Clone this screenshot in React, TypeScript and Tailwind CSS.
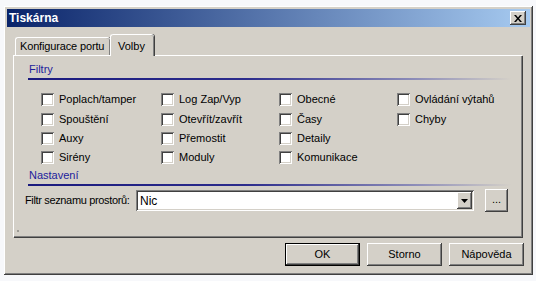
const RAISED =
  'shadow-[inset_-1px_-1px_#404040,inset_1px_1px_#ffffff,inset_-2px_-2px_#808080,inset_2px_2px_#d4d0c8]';
const SUNKEN =
  'shadow-[inset_1px_1px_#808080,inset_-1px_-1px_#ffffff,inset_2px_2px_#404040,inset_-2px_-2px_#d4d0c8]';

const FILTERS = [
  ['Poplach/tamper', 'Log Zap/Vyp', 'Obecné', 'Ovládání výtahů'],
  ['Spouštění', 'Otevřít/zavřít', 'Časy', 'Chyby'],
  ['Auxy', 'Přemostit', 'Detaily', null],
  ['Sirény', 'Moduly', 'Komunikace', null],
];

function CheckBox({ label }: { label: string }) {
  return (
    <div className="flex items-center gap-[5px] h-[13px] mt-[3px]">
      <span className={`w-[13px] h-[13px] bg-white shrink-0 ${SUNKEN}`} />
      <span className="leading-[13px] whitespace-nowrap">{label}</span>
    </div>
  );
}

function Section({ title }: { title: string }) {
  return (
    <div className="flex flex-col">
      <div className="pl-[15px] h-[14px] leading-[14px] text-[#1c1c9c]">{title}</div>
      <div className="ml-[14px] mt-[2px] w-[483px] h-[2px] bg-[linear-gradient(to_right,#1a1a7e_0%,#2c2c8c_45%,#8c8cb8_80%,#d4d0c8_100%)]" />
    </div>
  );
}

function Button({ children, primary }: { children: React.ReactNode; primary?: boolean }) {
  return (
    <div
      className={`w-[75px] h-[23px] flex items-center justify-center ${
        primary ? 'border border-black' : ''
      }`}
    >
      <div className={`w-full h-full flex items-center justify-center ${RAISED}`}>{children}</div>
    </div>
  );
}

export default function App() {
  return (
    <div
      className="w-[536px] h-[281px] bg-[#f7f8fb] overflow-hidden pt-[6px] pl-[4px] text-[11px] text-black"
      style={{ fontFamily: '"Liberation Sans", Arial, sans-serif' }}
    >
      <div className={`w-[529px] h-[269px] bg-[#d4d0c8] p-[3px] flex flex-col ${RAISED}`}>
        {/* title bar */}
        <div className="h-[18px] flex items-center pl-[2px] pr-[4px] bg-[linear-gradient(to_right,#0a246a,#a6caf0)]">
          <span className="text-white font-bold text-[12px] leading-[18px]">Tiskárna</span>
          <div className={`ml-auto w-[16px] h-[14px] bg-[#d4d0c8] flex items-center justify-center ${RAISED}`}>
            <svg width="8" height="7" viewBox="0 0 8 7">
              <path d="M0 0h2l2 2.5L6 0h2L5 3.5 8 7H6L4 4.5 2 7H0l3-3.5z" fill="#000" />
            </svg>
          </div>
        </div>

        <div className="flex flex-col px-[6px]">
          {/* tabs */}
          <div className="mt-[7px] h-[21px] flex items-end pl-[2px] relative z-10">
            <div className="w-[95px] h-[18px] rounded-t-[3px] border-t border-l border-white shadow-[inset_-1px_0_#808080,1px_0_#404040] flex items-center pl-[4px] tracking-[-0.15px] whitespace-nowrap">
              Konfigurace portu
            </div>
            <div className="w-[44px] h-[22px] -mb-[1px] bg-[#d4d0c8] rounded-t-[3px] border-t border-l border-white shadow-[inset_-1px_0_#808080,1px_0_#404040] flex items-start pt-[3px] pl-[7px]">
              Volby
            </div>
          </div>

          {/* panel */}
          <div className="relative w-[509px] h-[182px] border-t border-l border-white shadow-[inset_-1px_-1px_#808080,1px_1px_#404040] flex flex-col pt-[6px]">
            <Section title="Filtry" />
            <div className="mt-[10px] ml-[27px] grid grid-cols-[120px_118px_118px_118px] grid-rows-[20px_19px_19px_19px]">
              {FILTERS.flatMap((row, r) =>
                row.map((label, c) =>
                  label ? <CheckBox key={`${r}-${c}`} label={label} /> : <div key={`${r}-${c}`} />
                )
              )}
            </div>
            <div className="mt-[1px]">
              <Section title="Nastavení" />
            </div>
            <div className="mt-[3px] h-[23px] flex items-center pl-[11px]">
              <span className="w-[111px] whitespace-nowrap tracking-[-0.35px]">Filtr seznamu prostorů:</span>
              <div className={`w-[338px] h-[21px] bg-white flex items-center pl-[4px] pr-[2px] ${SUNKEN}`}>
                <span className="text-[12px]">Nic</span>
                <div className={`ml-auto w-[15px] h-[17px] bg-[#d4d0c8] flex items-center justify-center ${RAISED}`}>
                  <svg width="7" height="4" viewBox="0 0 7 4">
                    <path d="M0 0h7L3.5 4z" fill="#000" />
                  </svg>
                </div>
              </div>
              <div className={`ml-[11px] w-[23px] h-[23px] flex items-center justify-center pb-[2px] ${RAISED}`}>
                ...
              </div>
            </div>
            <div className="absolute left-[3px] bottom-[5px] w-[2px] h-[2px] bg-[#9c9a94]" />
          </div>

          {/* buttons */}
          <div className="mt-[6px] ml-[272px] flex gap-[7px]">
            <Button primary>OK</Button>
            <Button>Storno</Button>
            <Button>Nápověda</Button>
          </div>
        </div>
      </div>
    </div>
  );
}
